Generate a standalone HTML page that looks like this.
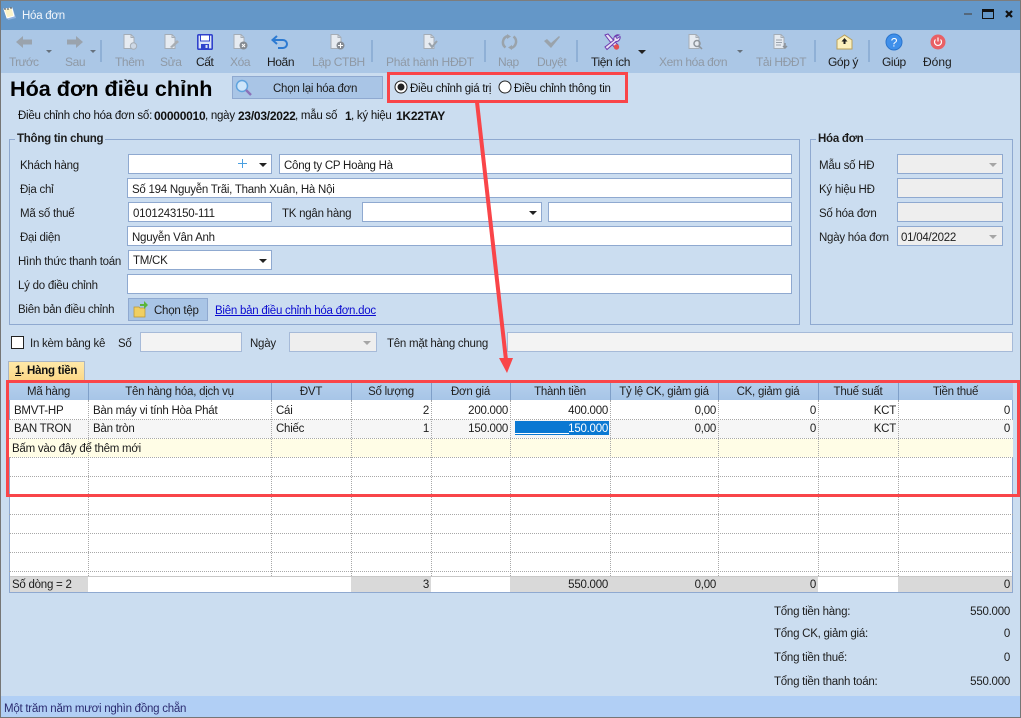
<!DOCTYPE html>
<html lang="vi"><head><meta charset="utf-8"><title>Hóa đơn</title>
<style>
html,body{margin:0;padding:0}
body{width:1021px;height:718px;overflow:hidden;position:relative;background:#cbddf0;font:11.5px/18px "Liberation Sans",sans-serif;letter-spacing:-.25px;color:#1c1c1c}
div,span,svg,a{position:absolute;white-space:nowrap;box-sizing:border-box}
u,b{position:static}
.g{color:#8f99a5;font-size:12px;line-height:14px;letter-spacing:-.4px}
.d{color:#1c1c1c;font-size:12px;line-height:14px;letter-spacing:-.4px}
.i{background:#fff;border:1px solid #8fa9d0;height:20px}
.o{background:#eee;border:1px solid #8fa9d0;height:20px}
.gb{border:1px solid #8fa9d0;top:139px;height:186px}
.l{background:#cbddf0;font-weight:bold;top:130px;padding:0 2px}
.s{width:2px;background:#8fb0d6;top:40px;height:22px}
.h{top:383px;text-align:center;color:#222}
.v{width:0;top:400px;height:176px;border-left:1px dotted #a8a8a8}
.vh{width:1px;top:382px;height:18px;background:#7f9fc8}
.r{left:9px;width:1004px;height:0;border-top:1px dotted #a8a8a8}
.n{text-align:right}
.ar{width:0;height:0;border-left:4px solid transparent;border-right:4px solid transparent;border-top:4px solid #222}
.am{width:0;height:0;border-left:3px solid transparent;border-right:3px solid transparent;border-top:3px solid #66717d}
.ag{width:0;height:0;border-left:4px solid transparent;border-right:4px solid transparent;border-top:4px solid #a5a5a5}
.bb{font-weight:bold;font-size:12px;letter-spacing:-.25px;color:#111}
</style></head><body>
<!-- window chrome -->
<div style="left:0;top:0;width:1021px;height:30px;background:#6497c8;border-top:1px solid #7d7d7d"></div>
<div style="left:0;top:30px;width:1021px;height:43px;background:#abc7e6"></div>
<div style="left:0;top:696px;width:1021px;height:21px;background:#b1cff5"></div>
<div style="left:0;top:0;width:1021px;height:718px;border:1px solid #767676;border-top-color:#7d7d7d"></div>
<svg style="left:3px;top:7px" width="14" height="15" viewBox="0 0 14 15"><path d="M2 3l8-1 3 9-8 2z" fill="#8fb2e0"/><path d="M1 2l8-1 2 8-7 2z" fill="#fbf3c8" stroke="#fff"/><path d="M2 1v2M5 1v2M8 0v2" stroke="#444" stroke-width="1"/></svg>
<div style="left:22px;top:7px;color:#f2f6fb">Hóa đơn</div>
<div style="left:964px;top:13px;width:8px;height:2px;background:#54687c"></div>
<div style="left:982px;top:9px;width:12px;height:10px;border:1px solid #111;border-top-width:3px"></div>
<svg style="left:1004px;top:9px" width="10" height="10" viewBox="0 0 10 10"><path d="M2 2l6 6M8 2l-6 6" stroke="#111" stroke-width="2.2"/></svg>

<!-- toolbar icons -->
<svg style="left:15px;top:35px" width="19" height="14" viewBox="0 0 19 14"><path d="M1 7l7-6v3.500h9v5H8V13z" fill="#9aa3ad"/></svg>
<div class="am" style="left:46px;top:50px"></div>
<svg style="left:65px;top:35px" width="19" height="14" viewBox="0 0 19 14"><path d="M18 7l-7-6v3.500H2v5h9V13z" fill="#9aa3ad"/></svg>
<div class="am" style="left:90px;top:50px"></div>
<svg style="left:122px;top:34px" width="16" height="16" viewBox="0 0 16 16"><path d="M2 .5h7l3 3v11H2z" fill="#e6ebf1" stroke="#a5adb6"/><path d="M9 .5v3h3" fill="none" stroke="#a5adb6"/><circle cx="11.500" cy="12" r="3.200" fill="#cdd8e6" stroke="#a5adb6"/></svg>
<svg style="left:163px;top:34px" width="17" height="16" viewBox="0 0 17 16"><path d="M2 .5h7l3 3v11H2z" fill="#e6ebf1" stroke="#a5adb6"/><path d="M9 .5v3h3" fill="none" stroke="#a5adb6"/><path d="M7 13l7-7 2 2-7 6z" fill="#a9aeb3"/></svg>
<svg style="left:197px;top:34px" width="16" height="16" viewBox="0 0 16 16"><rect x=".8" y=".8" width="14.400" height="14.400" rx="1" fill="#d9e2f7" stroke="#3042cc" stroke-width="1.600"/><rect x="3.500" y="1" width="9" height="6" fill="#fff" stroke="#3042cc"/><rect x="4" y="10" width="8" height="5" fill="#3042cc"/><rect x="8.500" y="11" width="2" height="3" fill="#d9e2f7"/></svg>
<svg style="left:232px;top:34px" width="17" height="16" viewBox="0 0 17 16"><path d="M2 .5h7l3 3v11H2z" fill="#e6ebf1" stroke="#a5adb6"/><path d="M9 .5v3h3" fill="none" stroke="#a5adb6"/><circle cx="11.500" cy="11.500" r="4" fill="#858b92"/><path d="M10 10l3 3M13 10l-3 3" stroke="#fff"/></svg>
<svg style="left:271px;top:35px" width="18" height="15" viewBox="0 0 18 15"><path d="M3 5h9a4 4 0 0 1 0 8H7" fill="none" stroke="#2c7ad2" stroke-width="2"/><path d="M6 1L1.500 5 6 9" fill="none" stroke="#2c7ad2" stroke-width="2"/></svg>
<svg style="left:329px;top:34px" width="17" height="16" viewBox="0 0 17 16"><path d="M2 .5h7l3 3v11H2z" fill="#e6ebf1" stroke="#a5adb6"/><path d="M9 .5v3h3" fill="none" stroke="#a5adb6"/><circle cx="11.500" cy="11.500" r="4" fill="#858b92"/><path d="M9 11.500h5M11.500 9v5" stroke="#fff"/></svg>
<svg style="left:422px;top:34px" width="17" height="16" viewBox="0 0 17 16"><path d="M2 .5h7l3 3v11H2z" fill="#e6ebf1" stroke="#a5adb6"/><path d="M9 .5v3h3" fill="none" stroke="#a5adb6"/><path d="M7 9l3 4 5-6" fill="none" stroke="#9aa3ab" stroke-width="2"/></svg>
<svg style="left:501px;top:34px" width="17" height="16" viewBox="0 0 17 16"><path d="M4.500 13.500A6.500 6.500 0 0 1 7 2M12.500 2.500A6.500 6.500 0 0 1 10 14" fill="none" stroke="#9aa3ab" stroke-width="2.500"/><path d="M6 0l4 2.500-4 2.500zM11 16l-4-2.500 4-2.500z" fill="#9aa3ab"/></svg>
<svg style="left:543px;top:35px" width="18" height="14" viewBox="0 0 18 14"><path d="M1 6l3-2 4 4 8-7 1 1-9 11z" fill="#9aa3ab"/></svg>
<svg style="left:603px;top:33px" width="18" height="18" viewBox="0 0 18 18"><path d="M2 2l3-1 10 11-3 3z" fill="#e9e2f5" stroke="#6d3bb0"/><path d="M16 2a4 4 0 0 0-5 5L2 14l2 2.500 9-8a4 4 0 0 0 4-5l-3 2-1.500-2z" fill="#e9e2f5" stroke="#6d3bb0"/><circle cx="13.500" cy="14" r="2.700" fill="#e45050"/></svg>
<div class="ar" style="left:638px;top:50px"></div>
<svg style="left:687px;top:34px" width="17" height="16" viewBox="0 0 17 16"><path d="M2 .5h7l3 3v11H2z" fill="#e6ebf1" stroke="#a5adb6"/><path d="M9 .5v3h3" fill="none" stroke="#a5adb6"/><circle cx="10" cy="9.500" r="3" fill="none" stroke="#8e959c" stroke-width="1.500"/><path d="M12 12l3 3" stroke="#8e959c" stroke-width="1.500"/></svg>
<div class="am" style="left:737px;top:50px"></div>
<svg style="left:772px;top:34px" width="17" height="16" viewBox="0 0 17 16"><path d="M2 .5h7l3 3v11H2z" fill="#e6ebf1" stroke="#a5adb6"/><path d="M9 .5v3h3" fill="none" stroke="#a5adb6"/><path d="M4 6h6M4 8.500h6M4 11h5" stroke="#99a2ac"/><path d="M13 9v4M11 12l2 2 2-2" stroke="#8b9299" stroke-width="1.500" fill="none"/></svg>
<svg style="left:836px;top:34px" width="17" height="16" viewBox="0 0 17 16"><path d="M1 6L8.500 1 16 6v9H1z" fill="#fbf0bd" stroke="#b9a05c"/><path d="M8.500 4l3 3.500h-2V10h-2V7.500h-2z" fill="#222"/></svg>
<svg style="left:885px;top:33px" width="18" height="18" viewBox="0 0 18 18"><circle cx="9" cy="9" r="8" fill="#3f8fea" stroke="#2a74cc"/><text x="9" y="13.500" text-anchor="middle" font-family="Liberation Sans" font-size="12" fill="#fff">?</text></svg>
<svg style="left:930px;top:34px" width="16" height="16" viewBox="0 0 16 16"><circle cx="8" cy="8" r="7.500" fill="#e96065"/><path d="M5.500 5.500a3.500 3.500 0 1 0 5 0M8 3.500v4" fill="none" stroke="#fff" stroke-width="1.200"/></svg>
<!-- toolbar separators -->
<div class="s" style="left:100px"></div><div class="s" style="left:371px"></div><div class="s" style="left:484px"></div><div class="s" style="left:576px"></div><div class="s" style="left:814px"></div><div class="s" style="left:868px"></div>
<!-- toolbar labels -->
<div class="g" style="left:9px;top:55px;letter-spacing:-.7px">Trước</div>
<div class="g" style="left:65px;top:55px">Sau</div>
<div class="g" style="left:115px;top:55px">Thêm</div>
<div class="g" style="left:160px;top:55px">Sửa</div>
<div class="d" style="left:196px;top:55px">Cất</div>
<div class="g" style="left:230px;top:55px">Xóa</div>
<div class="d" style="left:267px;top:55px">Hoãn</div>
<div class="g" style="left:312px;top:55px">Lập CTBH</div>
<div class="g" style="left:386px;top:55px;letter-spacing:-.25px">Phát hành HĐĐT</div>
<div class="g" style="left:498px;top:55px">Nạp</div>
<div class="g" style="left:537px;top:55px">Duyệt</div>
<div class="d" style="left:591px;top:55px">Tiện ích</div>
<div class="g" style="left:659px;top:55px">Xem hóa đơn</div>
<div class="g" style="left:756px;top:55px">Tải HĐĐT</div>
<div class="d" style="left:828px;top:55px">Góp ý</div>
<div class="d" style="left:882px;top:55px">Giúp</div>
<div class="d" style="left:923px;top:55px;letter-spacing:0">Đóng</div>

<!-- heading -->
<div style="left:10px;top:76px;font-size:21.6px;line-height:26px;letter-spacing:0;font-weight:bold;color:#000">Hóa đơn điều chỉnh</div>
<div style="left:232px;top:76px;width:151px;height:23px;background:#a9c5e6;border:1px solid #8fa9d0"></div>
<svg style="left:235px;top:79px" width="18" height="18" viewBox="0 0 18 18"><circle cx="7" cy="7" r="5.500" fill="#cfe6fa" stroke="#5fa3de" stroke-width="1.500"/><path d="M11 11l5 5" stroke="#8b72b8" stroke-width="2.500"/></svg>
<div style="left:273px;top:80px">Chọn lại hóa đơn</div>
<svg style="left:394px;top:80px" width="14" height="14" viewBox="0 0 14 14"><circle cx="7" cy="7" r="6" fill="#fff" stroke="#222"/><circle cx="7" cy="7" r="3.500" fill="#222"/></svg>
<div style="left:410px;top:80px;color:#111">Điều chỉnh giá trị</div>
<svg style="left:498px;top:80px" width="14" height="14" viewBox="0 0 14 14"><circle cx="7" cy="7" r="6" fill="#fff" stroke="#222"/></svg>
<div style="left:514px;top:80px;color:#111">Điều chỉnh thông tin</div>
<div style="left:18px;top:107px;color:#111">Điều chỉnh cho hóa đơn số:</div>
<div class="bb" style="left:154px;top:107px">00000010</div>
<div style="left:205px;top:107px;color:#111">, ngày</div>
<div class="bb" style="left:238px;top:107px">23/03/2022</div>
<div style="left:295px;top:107px;color:#111">, mẫu số</div>
<div class="bb" style="left:345px;top:107px">1</div>
<div style="left:351px;top:107px;color:#111">, ký hiệu</div>
<div class="bb" style="left:396px;top:107px">1K22TAY</div>

<!-- groups -->
<div class="gb" style="left:9px;width:791px"></div>
<div class="gb" style="left:810px;width:203px"></div>
<div class="l" style="left:15px">Thông tin chung</div>
<div class="l" style="left:816px">Hóa đơn</div>
<div style="left:20px;top:157px">Khách hàng</div>
<div style="left:20px;top:181px">Địa chỉ</div>
<div style="left:20px;top:205px">Mã số thuế</div>
<div style="left:20px;top:229px">Đại diện</div>
<div style="left:18px;top:253px">Hình thức thanh toán</div>
<div style="left:18px;top:277px">Lý do điều chỉnh</div>
<div style="left:18px;top:301px">Biên bản điều chỉnh</div>
<div class="i" style="left:128px;top:154px;width:144px"></div>
<svg style="left:238px;top:159px" width="9" height="9" viewBox="0 0 9 9"><path d="M4.500 0v9M0 4.500h9" stroke="#4a9fe0" stroke-width="1"/></svg>
<div class="ar" style="left:259px;top:163px"></div>
<div class="i" style="left:279px;top:154px;width:513px"></div>
<div style="left:284px;top:157px">Công ty CP Hoàng Hà</div>
<div class="i" style="left:127px;top:178px;width:665px"></div>
<div style="left:132px;top:181px">Số 194 Nguyễn Trãi, Thanh Xuân, Hà Nội</div>
<div class="i" style="left:128px;top:202px;width:144px"></div>
<div style="left:133px;top:205px">0101243150-111</div>
<div style="left:282px;top:205px">TK ngân hàng</div>
<div class="i" style="left:362px;top:202px;width:180px"></div>
<div class="ar" style="left:529px;top:211px"></div>
<div class="i" style="left:548px;top:202px;width:244px"></div>
<div class="i" style="left:127px;top:226px;width:665px"></div>
<div style="left:132px;top:229px">Nguyễn Vân Anh</div>
<div class="i" style="left:128px;top:250px;width:144px"></div>
<div style="left:133px;top:252px">TM/CK</div>
<div class="ar" style="left:259px;top:259px"></div>
<div class="i" style="left:127px;top:274px;width:665px"></div>
<div style="left:128px;top:298px;width:80px;height:23px;background:#a9c5e6;border:1px solid #8fa9d0"></div>
<svg style="left:133px;top:301px" width="15" height="17" viewBox="0 0 15 17"><path d="M1 6h5l1 1h5v9H1z" fill="#f0cf62" stroke="#b99533" stroke-width=".7"/><path d="M7 3h4V0l4 4-4 4V5H7z" fill="#5bb53a"/></svg>
<div style="left:154px;top:302px">Chọn tệp</div>
<div style="left:215px;top:302px;color:#0b0bd0"><u>Biên bản điều chỉnh hóa đơn.doc</u></div>

<div style="left:819px;top:157px">Mẫu số HĐ</div>
<div style="left:819px;top:181px">Ký hiệu HĐ</div>
<div style="left:819px;top:205px">Số hóa đơn</div>
<div style="left:819px;top:229px">Ngày hóa đơn</div>
<div class="o" style="left:897px;top:154px;width:106px"></div><div class="ag" style="left:989px;top:163px"></div>
<div class="o" style="left:897px;top:178px;width:106px"></div>
<div class="o" style="left:897px;top:202px;width:106px"></div>
<div class="o" style="left:897px;top:226px;width:106px"></div><div class="ag" style="left:989px;top:235px"></div>
<div style="left:901px;top:229px">01/04/2022</div>

<!-- in kem row -->
<div style="left:11px;top:336px;width:13px;height:13px;background:#fff;border:1px solid #222"></div>
<div style="left:30px;top:335px">In kèm bảng kê</div>
<div style="left:118px;top:335px">Số</div>
<div style="left:140px;top:332px;width:102px;height:20px;background:#f3f3f3;border:1px solid #a6bad8"></div>
<div style="left:250px;top:335px">Ngày</div>
<div style="left:289px;top:332px;width:88px;height:20px;background:#eee;border:1px solid #a6bad8"></div><div class="ag" style="left:363px;top:341px"></div>
<div style="left:387px;top:335px">Tên mặt hàng chung</div>
<div style="left:507px;top:332px;width:506px;height:20px;background:#f3f3f3;border:1px solid #a6bad8"></div>

<!-- tab -->
<div style="left:8px;top:361px;width:77px;height:19px;background:linear-gradient(#ffe9a8,#fbd888);border:1px solid #a9b5c4;border-bottom:none"></div>
<div style="left:15px;top:362px;font-weight:bold;color:#111"><u>1</u>. Hàng tiền</div>

<!-- grid -->
<div style="left:9px;top:381px;width:1004px;height:212px;background:#fff;border:1px solid #8fa9d0"></div>
<div style="left:9px;top:382px;width:1004px;height:18px;background:linear-gradient(#b4cfec,#a7c5e7)"></div>
<div style="left:9px;top:420px;width:1004px;height:18px;background:#f6f6f6"></div>
<div style="left:9px;top:439px;width:1004px;height:18px;background:#fffde6"></div>
<div class="r" style="top:419px"></div><div class="r" style="top:438px"></div><div class="r" style="top:457px"></div><div class="r" style="top:476px"></div><div class="r" style="top:495px"></div><div class="r" style="top:514px"></div><div class="r" style="top:533px"></div><div class="r" style="top:552px"></div><div class="r" style="top:571px"></div>
<div class="v" style="left:88px"></div><div class="v" style="left:271px"></div><div class="v" style="left:351px"></div><div class="v" style="left:431px"></div><div class="v" style="left:510px"></div><div class="v" style="left:610px"></div><div class="v" style="left:718px"></div><div class="v" style="left:818px"></div><div class="v" style="left:898px"></div>
<div class="vh" style="left:88px"></div><div class="vh" style="left:271px"></div><div class="vh" style="left:351px"></div><div class="vh" style="left:431px"></div><div class="vh" style="left:510px"></div><div class="vh" style="left:610px"></div><div class="vh" style="left:718px"></div><div class="vh" style="left:818px"></div><div class="vh" style="left:898px"></div>
<div class="h" style="left:9px;width:79px">Mã hàng</div>
<div class="h" style="left:88px;width:183px">Tên hàng hóa, dịch vụ</div>
<div class="h" style="left:271px;width:80px">ĐVT</div>
<div class="h" style="left:351px;width:80px">Số lượng</div>
<div class="h" style="left:431px;width:79px">Đơn giá</div>
<div class="h" style="left:510px;width:100px">Thành tiền</div>
<div class="h" style="left:610px;width:108px">Tỷ lệ CK, giảm giá</div>
<div class="h" style="left:718px;width:100px">CK, giảm giá</div>
<div class="h" style="left:818px;width:80px">Thuế suất</div>
<div class="h" style="left:898px;width:115px">Tiền thuế</div>

<div style="left:14px;top:402px">BMVT-HP</div><div style="left:93px;top:402px">Bàn máy vi tính Hòa Phát</div><div style="left:276px;top:402px">Cái</div>
<div class="n" style="left:351px;width:78px;top:402px">2</div><div class="n" style="left:431px;width:77px;top:402px">200.000</div><div class="n" style="left:510px;width:98px;top:402px">400.000</div><div class="n" style="left:610px;width:106px;top:402px">0,00</div><div class="n" style="left:718px;width:98px;top:402px">0</div><div class="n" style="left:818px;width:78px;top:402px">KCT</div><div class="n" style="left:898px;width:112px;top:402px">0</div>
<div style="left:14px;top:420px">BAN TRON</div><div style="left:93px;top:420px">Bàn tròn</div><div style="left:276px;top:420px">Chiếc</div>
<div class="n" style="left:351px;width:78px;top:420px">1</div><div class="n" style="left:431px;width:77px;top:420px">150.000</div>
<div style="left:515px;top:421px;width:94px;height:14px;background:#0a78d2"></div><div style="left:515px;top:433px;width:54px;height:1px;background:#fff"></div>
<div class="n" style="left:510px;width:98px;top:420px;color:#fff">150.000</div>
<div class="n" style="left:610px;width:106px;top:420px">0,00</div><div class="n" style="left:718px;width:98px;top:420px">0</div><div class="n" style="left:818px;width:78px;top:420px">KCT</div><div class="n" style="left:898px;width:112px;top:420px">0</div>
<div style="left:12px;top:440px">Bấm vào đây để thêm mới</div>
<!-- grid footer -->
<div style="left:10px;top:576px;width:1002px;height:16px;background:#fff;border-top:1px solid #c8c8c8"></div>
<div style="left:10px;top:577px;width:78px;height:15px;background:#d9d9d9"></div>
<div style="left:351px;top:577px;width:80px;height:15px;background:#d9d9d9"></div>
<div style="left:510px;top:577px;width:308px;height:15px;background:#d9d9d9"></div>
<div style="left:898px;top:577px;width:114px;height:15px;background:#d9d9d9"></div>
<div style="left:12px;top:576px">Số dòng = 2</div>
<div class="n" style="left:351px;width:78px;top:576px">3</div><div class="n" style="left:510px;width:98px;top:576px">550.000</div><div class="n" style="left:610px;width:106px;top:576px">0,00</div><div class="n" style="left:718px;width:98px;top:576px">0</div><div class="n" style="left:898px;width:112px;top:576px">0</div>

<!-- totals -->
<div style="left:774px;top:603px">Tổng tiền hàng:</div><div class="n" style="left:910px;width:100px;top:603px">550.000</div>
<div style="left:774px;top:625px">Tổng CK, giảm giá:</div><div class="n" style="left:910px;width:100px;top:625px">0</div>
<div style="left:774px;top:649px">Tổng tiền thuế:</div><div class="n" style="left:910px;width:100px;top:649px">0</div>
<div style="left:774px;top:673px">Tổng tiền thanh toán:</div><div class="n" style="left:910px;width:100px;top:673px">550.000</div>
<div style="left:4px;top:700px;color:#2b2b70">Một trăm năm mươi nghìn đồng chẵn</div>

<!-- red annotations -->
<div style="left:387px;top:72px;width:241px;height:31px;border:3px solid #f94549"></div>
<div style="left:6px;top:380px;width:1014px;height:117px;border:3px solid #f94549"></div>
<svg style="left:470px;top:100px" width="50" height="275" viewBox="0 0 50 275"><path d="M7 2L36 260" stroke="#f94549" stroke-width="4" fill="none"/><path d="M29 258h14l-6 15z" fill="#f94549"/></svg>
</body></html>
